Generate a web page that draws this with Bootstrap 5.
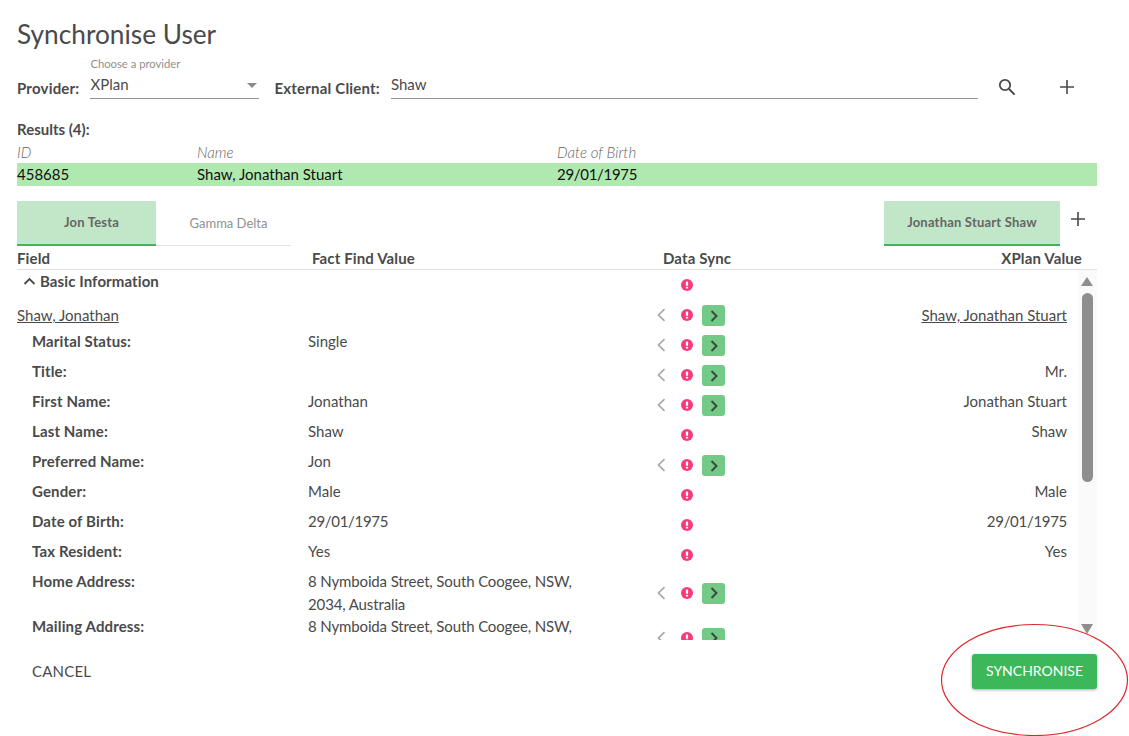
<!DOCTYPE html>
<html lang="en">
<head>
<meta charset="utf-8">
<title>Synchronise User</title>
<link href="https://cdn.jsdelivr.net/npm/bootstrap@5.3.0/dist/css/bootstrap.min.css" rel="stylesheet">
<style>
body{font-family:"Lato","Liberation Sans",sans-serif;font-size:15px;line-height:22.5px;color:#4a4a4a;background:#fff;height:736px;overflow:hidden}
.page-wrap{width:1080px;margin-left:17px;position:relative;height:736px}
.page-title{font-size:26.25px;line-height:34px;font-weight:400;margin:0;padding-top:17px;height:51px}
.form-line{height:56px}
.strong-label{font-weight:700;white-space:nowrap;padding-top:26px;line-height:22px;letter-spacing:.2px}
.float-field{border-bottom:1px solid #949494;height:48px;position:relative;padding-top:21px;line-height:24px}
.float-field small{position:absolute;left:0;top:6px;font-size:11.25px;line-height:14px;color:#8f8f8f}
.select-field{width:169px;margin-left:11px;margin-right:15px}
.caret-shape{position:absolute;right:2px;top:32px;border:5px solid transparent;border-top-color:#8c8c8c;border-bottom:0}
.input-field{width:587px;margin-left:11px}
.tool-icon{position:absolute;display:block}
.results-title{font-weight:700;margin-top:11px;line-height:22px}
.result-cols{display:grid;grid-template-columns:180px 360px 1fr;line-height:23px}
.result-head{font-style:italic;font-weight:300;color:#666;height:23px;line-height:24px}
.result-row{background:#b0e9b0;color:#111}
.date-text{letter-spacing:-.3px}
.tab-line{height:45px;margin-top:15px;position:relative}
.tab-item{height:45px;display:flex;align-items:center;justify-content:center;font-size:13px}
.tab-on{background:#c1e6c8;border-bottom:2px solid #3cb85a;font-weight:700;color:#666;letter-spacing:.2px}
.tab-off{border-bottom:1px solid #e3e3e3;color:#8f8f8f}
.tab-a{width:139px;padding-left:10px}.tab-b{width:135px;padding-left:10px}.tab-c{width:176px;margin-left:593px}
.tab-plus{position:absolute;left:1054px;top:11px}
.head-line{display:flex;font-weight:700;height:24px;line-height:25px;border-bottom:1px solid #e0e0e0;letter-spacing:.13px}
.h-field{width:295px}.h-fact{width:351px}.h-sync{width:120px}.h-x{width:299px;text-align:right}
.scroll-wrap{height:370px;overflow:hidden;position:relative;padding-right:19px}
.scroll-track{position:absolute;right:0;top:0;bottom:0;width:19px;background:#fafafa}
.scroll-thumb{position:absolute;left:4px;top:23px;width:11px;height:189px;border-radius:6px;background:#8e8e8e}
.scroll-up,.scroll-down{position:absolute;left:3px;border-left:6.5px solid transparent;border-right:6.5px solid transparent}
.scroll-up{top:7px;border-bottom:9px solid #8e8e8e}
.scroll-down{bottom:6px;border-top:10px solid #8e8e8e}
.data-line{display:grid;grid-template-columns:291px 332px 92px 335px;min-height:30px}
.data-line.two-line{min-height:45px}
.f-name{padding-left:15px;font-weight:700;letter-spacing:.13px}
.f-val{padding-right:40px}
.addr-text{letter-spacing:-.13px}
.f-sync{display:flex;align-items:center;position:relative}
.f-right{text-align:right}
.group-title{font-weight:700;padding-left:6px;display:flex;align-items:center;gap:4px;height:22px;letter-spacing:.1px}
.top-link{text-decoration:underline;line-height:30px}
.slot-left{width:10px;margin-left:16px;display:flex}
.slot-alert{width:12px;position:absolute;left:41px;top:50%;margin-top:-6px;display:flex}
.slot-btn{position:absolute;left:62px;top:50%;margin-top:-10px;width:23px;height:21px;background:#73ca86;border-radius:3px;display:flex;align-items:center;justify-content:center;padding:0;border:0}
.foot-line{display:flex;justify-content:space-between;align-items:center;height:35px;margin-top:14px;padding-left:15px;text-transform:uppercase}
.cancel-text{font-size:15px;letter-spacing:.2px;padding-bottom:1px}
.sync-btn{background:#3cb85a;color:#fff;border:0;border-radius:3px;width:125px;height:35px;font-size:14px;box-shadow:0 1px 3px rgba(0,0,0,.35);padding:0 0 2px;text-transform:uppercase}
.ring-mark{position:absolute;left:923px;top:623px;pointer-events:none}
</style>
</head>
<body>
<svg width="0" height="0" class="position-absolute">
<defs>
<symbol id="ic-alert" viewBox="0 0 12 12"><circle cx="6" cy="6" r="6" fill="#f73a78"/><rect x="4.9" y="2.5" width="2.2" height="4.3" rx=".6" fill="#fff"/><rect x="4.9" y="7.7" width="2.2" height="1.9" rx=".6" fill="#fff"/></symbol>
<symbol id="ic-left" viewBox="0 0 10 14"><path d="M8.5 1.2 2.5 7l6 5.8" fill="none" stroke="#a8a8a8" stroke-width="1.7"/></symbol>
<symbol id="ic-right" viewBox="0 0 10 14"><path d="M2.5 2 7.5 7l-5 5" fill="none" stroke="#3d4a40" stroke-width="2"/></symbol>
<symbol id="ic-plus" viewBox="0 0 14 14"><path d="M7 0v14M0 7h14" fill="none" stroke="#4a4a4a" stroke-width="1.6"/></symbol>
</defs>
</svg>
<div class="page-wrap">
  <h1 class="page-title">Synchronise User</h1>
  <div class="form-line d-flex align-items-start">
    <div class="strong-label">Provider:</div>
    <div class="float-field select-field"><small>Choose a provider</small>XPlan<span class="caret-shape"></span></div>
    <div class="strong-label">External Client:</div>
    <div class="float-field input-field">Shaw</div>
    <svg class="tool-icon" style="left:981px;top:78px" width="18" height="18" viewBox="0 0 18 18"><circle cx="7" cy="7" r="5.2" fill="none" stroke="#4a4a4a" stroke-width="1.8"/><path d="M10.8 10.8 16.6 16.6" stroke="#4a4a4a" stroke-width="2"/></svg>
    <svg class="tool-icon" style="left:1043px;top:80px" width="14" height="14"><use href="#ic-plus"/></svg>
  </div>
  <div class="results-title">Results (4):</div>
  <div class="result-cols result-head"><span>ID</span><span>Name</span><span>Date of Birth</span></div>
  <div class="result-cols result-row"><span>458685</span><span>Shaw, Jonathan Stuart</span><span class="date-text">29/01/1975</span></div>
  <div class="tab-line d-flex">
    <div class="tab-item tab-on tab-a">Jon Testa</div>
    <div class="tab-item tab-off tab-b">Gamma Delta</div>
    <div class="tab-item tab-on tab-c">Jonathan Stuart Shaw</div>
    <svg class="tab-plus" width="14" height="14"><use href="#ic-plus"/></svg>
  </div>
  <div class="head-line"><span class="h-field">Field</span><span class="h-fact">Fact Find Value</span><span class="h-sync">Data Sync</span><span class="h-x">XPlan Value</span></div>
  <div class="scroll-wrap">
    <div class="data-line">
      <div class="group-title"><svg width="13" height="8" viewBox="0 0 13 8"><path d="M1.5 7 6.5 2l5 5" fill="none" stroke="#4a4a4a" stroke-width="1.8"/></svg>Basic Information</div><div></div>
      <div class="f-sync"><span class="slot-alert"><svg width="12" height="12"><use href="#ic-alert"/></svg></span></div><div></div>
    </div>
    <div class="data-line"><div class="top-link">Shaw, Jonathan</div><div></div>
      <div class="f-sync"><span class="slot-left"><svg width="10" height="14"><use href="#ic-left"/></svg></span><span class="slot-alert"><svg width="12" height="12"><use href="#ic-alert"/></svg></span><button class="slot-btn"><svg width="10" height="14"><use href="#ic-right"/></svg></button></div>
      <div class="f-right top-link">Shaw, Jonathan Stuart</div></div>
    <div class="data-line"><div class="f-name">Marital Status:</div><div class="f-val">Single</div>
      <div class="f-sync"><span class="slot-left"><svg width="10" height="14"><use href="#ic-left"/></svg></span><span class="slot-alert"><svg width="12" height="12"><use href="#ic-alert"/></svg></span><button class="slot-btn"><svg width="10" height="14"><use href="#ic-right"/></svg></button></div>
      <div class="f-right"></div></div>
    <div class="data-line"><div class="f-name">Title:</div><div class="f-val"></div>
      <div class="f-sync"><span class="slot-left"><svg width="10" height="14"><use href="#ic-left"/></svg></span><span class="slot-alert"><svg width="12" height="12"><use href="#ic-alert"/></svg></span><button class="slot-btn"><svg width="10" height="14"><use href="#ic-right"/></svg></button></div>
      <div class="f-right">Mr.</div></div>
    <div class="data-line"><div class="f-name">First Name:</div><div class="f-val">Jonathan</div>
      <div class="f-sync"><span class="slot-left"><svg width="10" height="14"><use href="#ic-left"/></svg></span><span class="slot-alert"><svg width="12" height="12"><use href="#ic-alert"/></svg></span><button class="slot-btn"><svg width="10" height="14"><use href="#ic-right"/></svg></button></div>
      <div class="f-right">Jonathan Stuart</div></div>
    <div class="data-line"><div class="f-name">Last Name:</div><div class="f-val">Shaw</div>
      <div class="f-sync"><span class="slot-alert"><svg width="12" height="12"><use href="#ic-alert"/></svg></span></div>
      <div class="f-right">Shaw</div></div>
    <div class="data-line"><div class="f-name">Preferred Name:</div><div class="f-val">Jon</div>
      <div class="f-sync"><span class="slot-left"><svg width="10" height="14"><use href="#ic-left"/></svg></span><span class="slot-alert"><svg width="12" height="12"><use href="#ic-alert"/></svg></span><button class="slot-btn"><svg width="10" height="14"><use href="#ic-right"/></svg></button></div>
      <div class="f-right"></div></div>
    <div class="data-line"><div class="f-name">Gender:</div><div class="f-val">Male</div>
      <div class="f-sync"><span class="slot-alert"><svg width="12" height="12"><use href="#ic-alert"/></svg></span></div>
      <div class="f-right">Male</div></div>
    <div class="data-line"><div class="f-name">Date of Birth:</div><div class="f-val date-text">29/01/1975</div>
      <div class="f-sync"><span class="slot-alert"><svg width="12" height="12"><use href="#ic-alert"/></svg></span></div>
      <div class="f-right date-text">29/01/1975</div></div>
    <div class="data-line"><div class="f-name">Tax Resident:</div><div class="f-val">Yes</div>
      <div class="f-sync"><span class="slot-alert"><svg width="12" height="12"><use href="#ic-alert"/></svg></span></div>
      <div class="f-right">Yes</div></div>
    <div class="data-line two-line"><div class="f-name">Home Address:</div><div class="f-val addr-text">8 Nymboida Street, South Coogee, NSW, 2034, Australia</div>
      <div class="f-sync"><span class="slot-left"><svg width="10" height="14"><use href="#ic-left"/></svg></span><span class="slot-alert"><svg width="12" height="12"><use href="#ic-alert"/></svg></span><button class="slot-btn"><svg width="10" height="14"><use href="#ic-right"/></svg></button></div>
      <div class="f-right"></div></div>
    <div class="data-line two-line"><div class="f-name">Mailing Address:</div><div class="f-val addr-text">8 Nymboida Street, South Coogee, NSW,</div>
      <div class="f-sync"><span class="slot-left"><svg width="10" height="14"><use href="#ic-left"/></svg></span><span class="slot-alert"><svg width="12" height="12"><use href="#ic-alert"/></svg></span><button class="slot-btn"><svg width="10" height="14"><use href="#ic-right"/></svg></button></div>
      <div class="f-right"></div></div>
    <div class="scroll-track"><span class="scroll-up"></span><span class="scroll-thumb"></span><span class="scroll-down"></span></div>
  </div>
  <div class="foot-line"><span class="cancel-text">Cancel</span><button class="btn sync-btn">Synchronise</button></div>
  <svg class="ring-mark" width="190" height="114" viewBox="0 0 190 114"><ellipse cx="94.5" cy="57" rx="93" ry="55.5" fill="none" stroke="#e0272b" stroke-width="1.2"/></svg>
</div>
<script src="https://cdn.jsdelivr.net/npm/bootstrap@5.3.0/dist/js/bootstrap.bundle.min.js"></script>
</body>
</html>
